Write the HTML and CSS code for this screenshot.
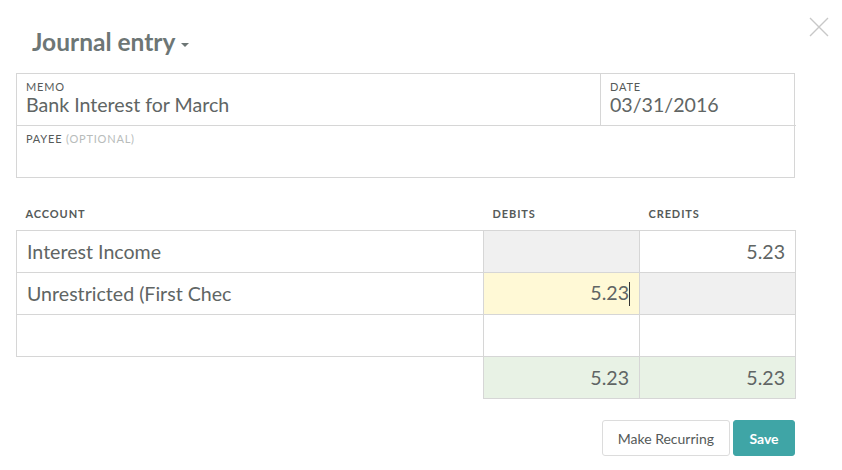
FILE: index.html
```html
<!DOCTYPE html>
<html lang="en">
<head>
    <meta charset="UTF-8" />
    <title>Journal entry</title>
    <link rel="stylesheet" href="styles.css">
</head>
<body>
    <div class="dialog">
        <button class="close" aria-label="Close">
            <svg width="20" height="20" viewBox="0 0 20 20">
                <path d="M1 1 L19 19 M19 1 L1 19" stroke="#c8c8c8" stroke-width="1.4" fill="none" />
            </svg>
        </button>

        <h1 class="title">Journal entry <span class="caret"></span></h1>

        <div class="fields">
            <div class="field memo">
                <div class="label">MEMO</div>
                <div class="value">Bank Interest for March</div>
            </div>
            <div class="field date">
                <div class="label">DATE</div>
                <div class="value">03/31/2016</div>
            </div>
            <div class="field payee">
                <div class="label">PAYEE <span class="optional">(OPTIONAL)</span></div>
            </div>
        </div>

        <table class="lines">
            <thead>
                <tr>
                    <th class="col-account">ACCOUNT</th>
                    <th class="col-amount">DEBITS</th>
                    <th class="col-amount">CREDITS</th>
                </tr>
            </thead>
            <tbody>
                <tr>
                    <td class="account">Interest Income</td>
                    <td class="amount disabled"></td>
                    <td class="amount">5.23</td>
                </tr>
                <tr>
                    <td class="account">Unrestricted (First Chec</td>
                    <td class="amount active">5.23<span class="cursor"></span></td>
                    <td class="amount disabled"></td>
                </tr>
                <tr>
                    <td class="account"></td>
                    <td class="amount"></td>
                    <td class="amount"></td>
                </tr>
                <tr class="totals">
                    <td class="blank"></td>
                    <td class="amount total">5.23</td>
                    <td class="amount total">5.23</td>
                </tr>
            </tbody>
        </table>

        <div class="actions">
            <button class="btn">Make Recurring</button>
            <button class="btn primary">Save</button>
        </div>
    </div>
</body>
</html>
```

FILE: styles.css
```css
body {
    margin: 0;
    background: #fff;
    font-family: Lato, "Open Sans", sans-serif;
    color: #5f6463;
}

.dialog {
    position: relative;
    width: 779px;
    padding: 0 16px;
}

.close {
    position: absolute;
    top: 17px;
    left: 809px;
    padding: 0;
    border: none;
    background: none;
}

.title {
    margin: 0;
    padding: 27px 0 0 16px;
    height: 73px;
    box-sizing: border-box;
    font-size: 24.5px;
    line-height: 30px;
    font-weight: 700;
    color: #6d7675;
}

.caret {
    display: inline-block;
    vertical-align: middle;
    margin-left: 0;
    border-left: 4px solid transparent;
    border-right: 4px solid transparent;
    border-top: 4px solid #6d7675;
}

/* header fields */
.fields {
    display: grid;
    grid-template-columns: 584px 195px;
    grid-template-rows: 52px 51px;
    border: 1px solid #d6d6d6;
    box-sizing: border-box;
    width: 779px;
}

.field {
    padding: 6px 9px 0;
}

.memo {
    border-right: 1px solid #d6d6d6;
    border-bottom: 1px solid #d6d6d6;
}

.date {
    border-bottom: 1px solid #d6d6d6;
}

.payee {
    grid-column: 1 / 3;
}

.label {
    font-size: 11px;
    letter-spacing: 0.8px;
    line-height: 14px;
    color: #555a59;
}

.optional {
    color: #b8bcbb;
}

.value {
    font-size: 19.6px;
    line-height: 22px;
    color: #606564;
}

/* lines table */
.lines {
    margin-top: 29px;
    border-collapse: collapse;
    width: 779px;
    table-layout: fixed;
}

.lines th {
    text-align: left;
    font-size: 11px;
    font-weight: 700;
    letter-spacing: 0.9px;
    color: #555a59;
    padding: 0 0 9px 9px;
    height: 14px;
    line-height: 14px;
}

.col-account {
    width: 458px;
}

.col-amount {
    width: 147px;
}

.lines td {
    border: 1px solid #d6d6d6;
    height: 41px;
    padding: 0 10px;
    font-size: 19.6px;
    line-height: 24px;
    color: #606564;
}

.amount {
    text-align: right;
}

.disabled {
    background: #f0f0f0;
}

.active {
    background: #fff9d6;
}

.cursor {
    display: inline-block;
    width: 1px;
    height: 24px;
    margin-right: -1px;
    vertical-align: -6px;
    background: #333;
}

.total {
    background: #e8f2e5;
}

.lines td.blank {
    border: none;
    border-top: 1px solid #d6d6d6;
}

/* actions */
.actions {
    display: flex;
    justify-content: flex-end;
    gap: 3px;
    margin-top: 21px;
}

.btn {
    height: 36px;
    padding: 0 15px;
    border: 1px solid #dcdcdc;
    border-radius: 3px;
    background: #fff;
    font-family: Lato, "Open Sans", sans-serif;
    font-size: 14px;
    color: #555a59;
}

.btn.primary {
    width: 62px;
    padding: 0;
    border-color: #3fa5a6;
    background: #3fa5a6;
    color: #fff;
    font-weight: 700;
}
```
